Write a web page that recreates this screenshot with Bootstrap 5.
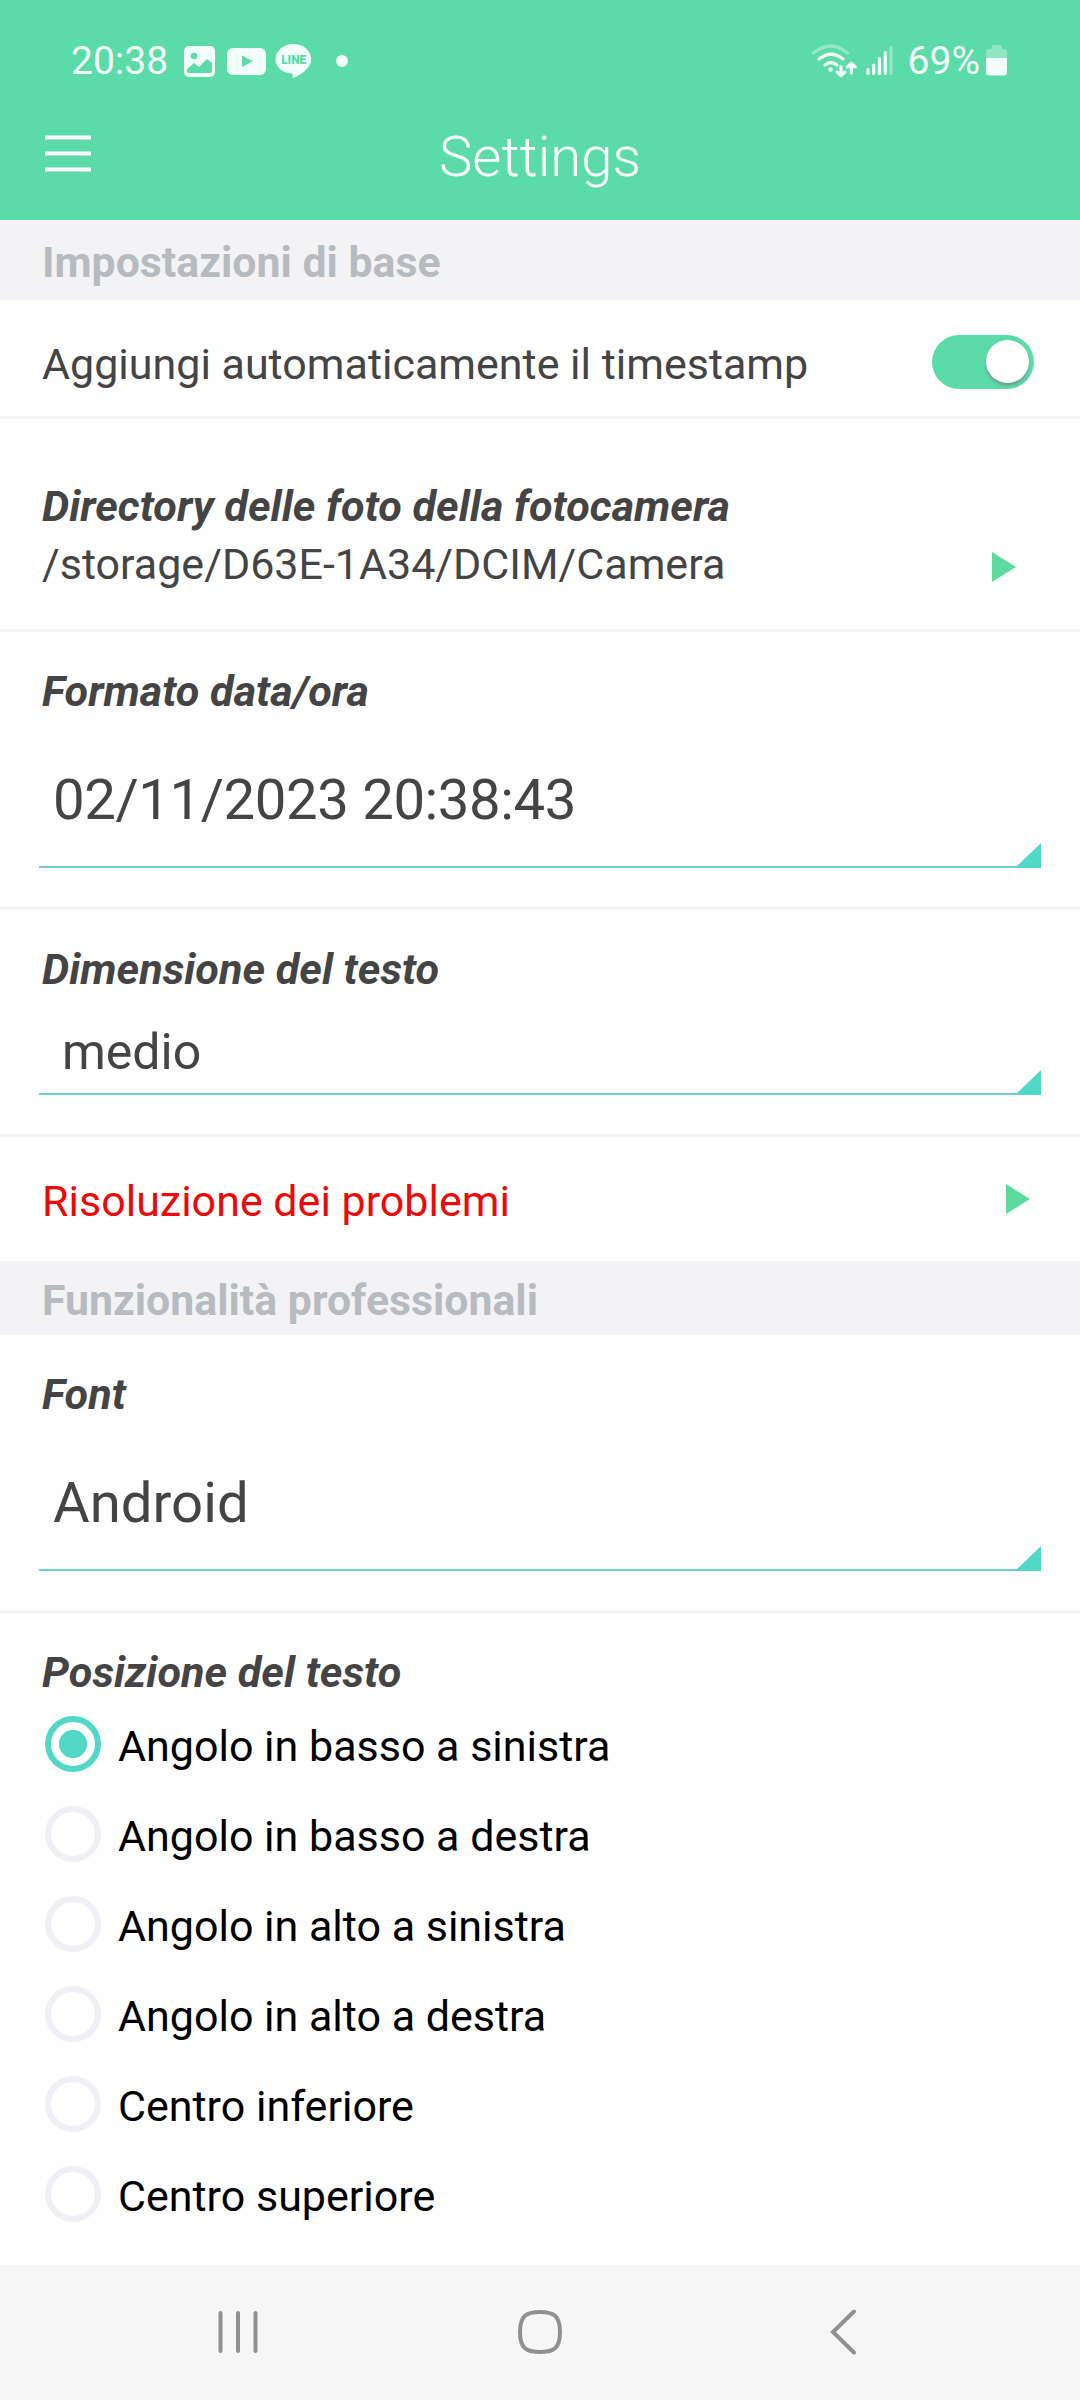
<!DOCTYPE html>
<html lang="it">
<head>
<meta charset="utf-8">
<meta name="viewport" content="width=device-width, initial-scale=1">
<title>Settings</title>
<link href="https://cdn.jsdelivr.net/npm/bootstrap@5.3.0/dist/css/bootstrap.min.css" rel="stylesheet">
<style>
  :root { --mint: #5bdba7; --aqua: #52d8c7; --ink: #444; }
  body { font-family: Roboto, "Noto Sans", sans-serif; font-size: 43px; line-height: 50px; color: var(--ink); background: #fefefe; }
  svg { display: block; flex: none; }
  .app-screen { width: 1080px; height: 2400px; overflow: hidden; }
  .app-head { height: 220px; background: var(--mint); color: #fff; }
  .status-bar { height: 120px; padding: 2px 72px 0 71px; font-size: 39px; color: #f3fdf9; }
  .status-left { gap: 12px; }
  .title-bar { height: 100px; }
  .menu-btn { width: 136px; padding: 15px 0 0 45px; }
  .page-title { font-weight: 300; font-size: 56.300px; line-height: 70px; padding-top: 2px; }
  .sect-head { height: 80px; padding: 17px 42px 0; background: #f3f3f6; color: #b7bbc0; font-weight: 700; font-size: 42.800px; }
  .sect-head.compact { height: 74px; padding-top: 14px; }
  .set-row { border-bottom: 3px solid #f3f3f4; padding: 0 42px; }
  .row-title { font-weight: 700; font-style: italic; font-size: 43.200px; }
  .toggle-row { height: 119px; padding-top: 39px; }
  .form-switch .form-check-input.big-switch { width: 102px; height: 54px; margin: -4px 4px 0 0; border: 0; float: none; background-color: var(--mint); background-image: none; padding: 5px; display: flex; justify-content: flex-end; box-shadow: none; }
  .big-switch::before { content: ""; width: 43px; height: 43px; border-radius: 50%; background: #fff; box-shadow: 0 3px 3px rgba(120,120,140,.55); }
  .dir-row { height: 213px; padding-top: 63px; }
  .dir-row .row-title { margin-bottom: 7px; }
  .dir-row svg { margin-right: 22px; }
  .pick-row { padding: 35px 39px 39px; }
  .pick-row .row-title { padding-left: 3px; }
  .picker { height: 151px; padding: 48px 0 0 14px; border-bottom: 2px solid #68d2c7; font-size: 56.300px; line-height: 70px; color: var(--ink); }
  .date-value { letter-spacing: -.4px; }
  .picker.small-value { height: 100px; padding: 27px 0 0 23px; font-size: 50px; line-height: 60px; }
  .picker svg { margin-bottom: -2px; }
  .trouble-row { height: 124px; padding: 39px 42px 0; color: #e90a0a; }
  .trouble-row svg { margin-top: 1px; }
  .pos-block { padding: 35px 42px 0; height: 652px; }
  .pos-item { height: 90px; padding: 17px 0 0 3px; margin: 0; color: #000; }
  .pos-list { padding-top: 1px; }
  .form-check-input.ring { width: 56px; height: 56px; border: 6px solid #efeff5; margin: 0 17px 0 0; float: none; background-color: transparent; flex: none; }
  .form-check-input.ring:checked { border-color: var(--aqua); background-color: transparent; background-image: radial-gradient(circle, #52d8c7 13.7px, transparent 14.5px); background-size: 100% 100%; }
  .pos-item label { padding-top: 5px; }
  .nav-keys { height: 135px; background: #f6f6f6; padding-bottom: 1px; }
  .key-slot { width: 302px; }
</style>
</head>
<body>
<div class="app-screen d-flex flex-column">
  <header class="app-head flex-shrink-0">
    <div class="status-bar d-flex align-items-center justify-content-between">
      <div class="status-left d-flex align-items-center">
        <span>20:38</span>
        <svg width="180" height="40" viewBox="180 41 180 40" fill="#f3fdf9">
          <rect x="184" y="46" width="31" height="31" rx="5"/>
          <circle cx="194" cy="56" r="3.300" fill="#5bdba7"/>
          <path d="M187 69l7-6 5 4 8-8 5 4v8q0 2-2 2h-21q-2 0-2-2z" fill="#5bdba7"/>
          <rect x="227" y="48" width="39" height="27" rx="6"/>
          <path d="M242 55.500v11.500l11-5.750z" fill="#5bdba7"/>
          <path d="M293.500 44c10 0 17.700 6.700 17.700 15.200 0 8-8.500 14.500-18.700 19.300v-5c-10-.3-17-6.400-17-14.300 0-8.500 8-15.200 18-15.200z"/>
          <text x="293.700" y="64.300" text-anchor="middle" font-family="Roboto, sans-serif" font-weight="900" font-size="12" textLength="25" lengthAdjust="spacingAndGlyphs" fill="#5bdba7">LINE</text>
          <circle cx="342" cy="61" r="6"/>
        </svg>
      </div>
      <div class="d-flex align-items-center">
        <svg width="97" height="40" viewBox="811 41 97 40" fill="none" stroke="#f3fdf9" stroke-width="3.200" stroke-linecap="round">
          <path d="M813.500 53q17-14 34 0" opacity=".38"/>
          <path d="M819 59q12-9.500 24 0M825 65q6-5 12 0"/>
          <circle cx="830.500" cy="69.500" r="2.300" fill="#f3fdf9" stroke="none"/>
          <path d="M841 66.500v8.500m-4-3l4 3.500 4-3.500M851.300 73v-9.500m-4 3.500l4-3.500 4 3.500"/>
          <path d="M868 69.500v4M873.700 65v8.500M879.400 58.500v15M885.300 52.500v21"/>
          <path d="M891 47.500v26" opacity=".38"/>
        </svg>
        <span>69%</span>
        <svg class="ms-1" width="24" height="40" viewBox="984 41 24 40" fill="#f3fdf9">
          <path d="M986 58v-6q0-3 3-3h2.500v-2q0-2 2-2h6.500q2 0 2 2v2h2q3 0 3 3v6z" opacity=".35"/>
          <path d="M986 58h21v14.500q0 3-3 3h-15q-3 0-3-3z"/>
        </svg>
      </div>
    </div>
    <div class="title-bar d-flex justify-content-between">
      <div class="menu-btn"><svg width="46" height="38" viewBox="0 0 46 38"><path d="M0 2.500h46M0 18.500h46M0 34.500h46" stroke="#fff" stroke-width="4"/></svg></div>
      <h1 class="page-title m-0">Settings</h1>
      <div class="menu-btn"></div>
    </div>
  </header>

  <main class="flex-grow-1">
    <div class="sect-head">Impostazioni di base</div>
    <div class="set-row toggle-row d-flex justify-content-between">
      <label for="auto">Aggiungi automaticamente il timestamp</label>
      <div class="form-switch p-0 m-0"><input class="form-check-input big-switch" type="checkbox" id="auto" checked></div>
    </div>
    <div class="set-row dir-row d-flex justify-content-between">
      <div>
        <div class="row-title">Directory delle foto della fotocamera</div>
        <div>/storage/D63E-1A34/DCIM/Camera</div>
      </div>
      <svg class="mt-auto" width="24" height="78" viewBox="0 0 24 78"><path d="M0 1v30l24-15z" fill="#5fda9f"/></svg>
    </div>
    <div class="set-row pick-row">
      <div class="row-title">Formato data/ora</div>
      <div class="picker d-flex justify-content-between"><span class="date-value">02/11/2023 20:38:43</span>
        <svg class="align-self-end" width="25" height="25" viewBox="0 0 25 25"><path d="M25 0v25H0v-1z" fill="#52d8c7"/></svg></div>
    </div>
    <div class="set-row pick-row">
      <div class="row-title">Dimensione del testo</div>
      <div class="picker small-value d-flex justify-content-between">medio
        <svg class="align-self-end" width="25" height="25" viewBox="0 0 25 25"><path d="M25 0v25H0v-1z" fill="#52d8c7"/></svg></div>
    </div>
    <div class="trouble-row d-flex justify-content-between">Risoluzione dei problemi
      <svg class="me-2" width="24" height="44" viewBox="0 0 24 44"><path d="M0 7v30l24-15z" fill="#5fda9f"/></svg>
    </div>
    <div class="sect-head compact">Funzionalità professionali</div>
    <div class="set-row pick-row">
      <div class="row-title">Font</div>
      <div class="picker d-flex justify-content-between">Android
        <svg class="align-self-end" width="25" height="25" viewBox="0 0 25 25"><path d="M25 0v25H0v-1z" fill="#52d8c7"/></svg></div>
    </div>
    <div class="pos-block">
      <div class="row-title">Posizione del testo</div>
      <div class="pos-list">
        <div class="pos-item d-flex align-items-start"><input class="form-check-input ring" type="radio" name="pos" id="p1" checked><label for="p1">Angolo in basso a sinistra</label></div>
        <div class="pos-item d-flex align-items-start"><input class="form-check-input ring" type="radio" name="pos" id="p2"><label for="p2">Angolo in basso a destra</label></div>
        <div class="pos-item d-flex align-items-start"><input class="form-check-input ring" type="radio" name="pos" id="p3"><label for="p3">Angolo in alto a sinistra</label></div>
        <div class="pos-item d-flex align-items-start"><input class="form-check-input ring" type="radio" name="pos" id="p4"><label for="p4">Angolo in alto a destra</label></div>
        <div class="pos-item d-flex align-items-start"><input class="form-check-input ring" type="radio" name="pos" id="p5"><label for="p5">Centro inferiore</label></div>
        <div class="pos-item d-flex align-items-start"><input class="form-check-input ring" type="radio" name="pos" id="p6"><label for="p6">Centro superiore</label></div>
      </div>
    </div>
  </main>

  <nav class="nav-keys d-flex justify-content-center align-items-center flex-shrink-0">
    <div class="key-slot d-flex justify-content-center"><svg width="44" height="48" viewBox="0 0 44 48"><path d="M4.500 5v38M22 5v38M39.500 5v38" stroke="#909090" stroke-width="4" stroke-linecap="round"/></svg></div>
    <div class="key-slot d-flex justify-content-center"><svg width="48" height="48" viewBox="0 0 48 48"><path d="M24 4C38 4 44 8 44 24S38 44 24 44 4 40 4 24 10 4 24 4z" fill="none" stroke="#909090" stroke-width="4"/></svg></div>
    <div class="key-slot d-flex justify-content-center"><svg width="28" height="48" viewBox="0 0 28 48"><path d="M26 3.500L5 24l21 20.500" fill="none" stroke="#909090" stroke-width="4" stroke-linecap="round"/></svg></div>
  </nav>
</div>
<script src="https://cdn.jsdelivr.net/npm/bootstrap@5.3.0/dist/js/bootstrap.bundle.min.js"></script>
</body>
</html>
